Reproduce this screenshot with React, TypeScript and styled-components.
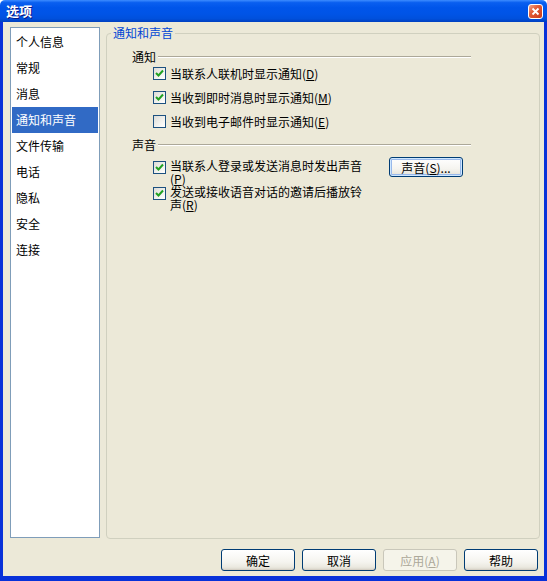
import React from "react";
import styled, { createGlobalStyle } from "styled-components";

const Global = createGlobalStyle`
  html, body { margin: 0; padding: 0; background: #ffffff; }
  body {
    font-family: "Noto Sans CJK SC", "Liberation Sans", sans-serif;
    font-size: 12px;
    color: #000;
  }
  #root { width: 547px; height: 581px; }
`;

const Window = styled.div`
  width: 547px;
  height: 581px;
  display: flex;
  flex-direction: column;
  box-sizing: border-box;
`;

const TitleBar = styled.div`
  height: 22px;
  flex: none;
  display: flex;
  align-items: center;
  justify-content: space-between;
  padding: 0 4px 0 6px;
  border-radius: 5px 5px 0 0;
  background: linear-gradient(
    to bottom,
    #3d8cff 0%,
    #0a5ff0 12%,
    #0055ea 35%,
    #0054e6 65%,
    #0050dc 85%,
    #003fc0 100%
  );
`;

const Title = styled.span`
  color: #fff;
  font-weight: bold;
  font-size: 13px;
  line-height: 14px;
  text-shadow: 1px 1px 0 #0a1883;
`;

const CloseButton = styled.span`
  width: 15px;
  height: 15px;
  box-sizing: border-box;
  border: 1px solid #fff;
  border-radius: 3px;
  background: linear-gradient(135deg, #f0a58d 0%, #e25b35 40%, #c83a1c 100%);
  display: flex;
  align-items: center;
  justify-content: center;
`;

const Frame = styled.div`
  flex: 1;
  display: flex;
  flex-direction: column;
  background: #ece9d8;
  border-style: solid;
  border-color: #0831d9;
  border-width: 0 3px 5px 3px;
  min-height: 0;
`;

const MainRow = styled.div`
  flex: 1;
  display: flex;
  gap: 6px;
  padding: 5px 4px 0 7px;
  min-height: 0;
`;

const NavList = styled.ul`
  list-style: none;
  margin: 0 0 1px 0;
  padding: 1px;
  width: 90px;
  box-sizing: border-box;
  background: #fff;
  border: 1px solid #7f9db9;
`;

const NavItem = styled.li<{ $selected?: boolean }>`
  height: 26px;
  line-height: 26px;
  padding-left: 4px;
  white-space: nowrap;
  color: ${(p) => (p.$selected ? "#fff" : "#000")};
  background: ${(p) => (p.$selected ? "#316ac5" : "transparent")};
`;

const GroupBox = styled.fieldset`
  flex: 1;
  margin: 0;
  padding: 0;
  min-width: 0;
  border: 1px solid #d0d0bf;
  border-radius: 4px;
`;

const Legend = styled.legend`
  margin-left: 4px;
  padding: 0 2px;
  line-height: 12px;
  color: #0046d5;
`;

const GroupContent = styled.div`
  padding-left: 24px;
`;

const Section = styled.div<{ $top: number }>`
  width: 340px;
  margin-top: ${(p) => p.$top}px;
  display: flex;
  flex-direction: column;
`;

const Heading = styled.div`
  display: flex;
  align-items: center;
  height: 14px;
  line-height: 14px;
  padding-left: 1px;
`;

const HeadingLine = styled.span`
  flex: 1;
  margin-left: 2px;
  border-top: 1px solid #aca899;
  border-bottom: 1px solid #ffffff;
`;

const Options = styled.div<{ $top: number; $gap: number }>`
  display: flex;
  flex-direction: column;
  gap: ${(p) => p.$gap}px;
  margin-top: ${(p) => p.$top}px;
  padding-left: 22px;
`;

const Row = styled.div`
  display: flex;
  align-items: flex-start;
  gap: 4px;
`;

const Box = styled.span<{ $top: number }>`
  width: 13px;
  height: 13px;
  flex: none;
  margin-top: ${(p) => p.$top}px;
  box-sizing: border-box;
  border: 1px solid #1c5180;
  background: linear-gradient(135deg, #dcdcd7 0%, #f3f3ef 60%, #ffffff 100%);
  display: flex;
  align-items: center;
  justify-content: center;
`;

const Label = styled.span<{ $lh: number; $width?: number }>`
  line-height: ${(p) => p.$lh}px;
  white-space: nowrap;
  ${(p) => (p.$width ? `width: ${p.$width}px;` : "")}
  u { text-decoration-thickness: 1px; text-underline-offset: 1px; }
`;

const XPButton = styled.button<{ $focused?: boolean }>`
  width: 74px;
  height: 22px;
  padding: 0;
  box-sizing: border-box;
  font-family: inherit;
  font-size: 12px;
  color: #000;
  border: 1px solid #003c74;
  border-radius: 3px;
  background: linear-gradient(to bottom, #ffffff 0%, #f5f4ef 60%, #ebe9e0 85%, #d8d4c8 100%);
  box-shadow: ${(p) =>
    p.$focused
      ? "inset 0 0 0 1px #cee7ff, inset 0 0 0 2px #98b8ea"
      : "inset 0 -1px 0 #d6d0c5"};
  u { text-decoration-thickness: 1px; }
  &:disabled {
    color: #aca899;
    border-color: #c9c7ba;
    background: #f5f4ea;
    box-shadow: none;
  }
`;

const SoundButton = styled(XPButton)`
  height: 20px;
  margin: -2px 0 0 15px;
`;

const Footer = styled.div`
  flex: none;
  display: flex;
  justify-content: flex-end;
  gap: 7px;
  padding: 10px 6px 5px 0;
`;

const Check = ({ checked, top }: { checked: boolean; top: number }) => (
  <Box $top={top}>
    {checked && (
      <svg width="9" height="9" viewBox="0 0 9 9">
        <path d="M1 4 L3.5 6.5 L8 1.5" fill="none" stroke="#21a121" strokeWidth="2" />
      </svg>
    )}
  </Box>
);

const navItems = ["个人信息", "常规", "消息", "通知和声音", "文件传输", "电话", "隐私", "安全", "连接"];

export default function App() {
  return (
    <>
      <Global />
      <Window>
        <TitleBar>
          <Title>选项</Title>
          <CloseButton>
            <svg width="9" height="9" viewBox="0 0 9 9">
              <path d="M1.5 1.5 L7.5 7.5 M7.5 1.5 L1.5 7.5" stroke="#fff" strokeWidth="1.8" />
            </svg>
          </CloseButton>
        </TitleBar>
        <Frame>
          <MainRow>
            <NavList>
              {navItems.map((n) => (
                <NavItem key={n} $selected={n === "通知和声音"}>
                  {n}
                </NavItem>
              ))}
            </NavList>
            <GroupBox>
              <Legend>通知和声音</Legend>
              <GroupContent>
                <Section $top={11}>
                  <Heading>
                    通知
                    <HeadingLine />
                  </Heading>
                  <Options $top={2} $gap={8}>
                    <Row>
                      <Check checked top={1} />
                      <Label $lh={16}>
                        当联系人联机时显示通知(<u>D</u>)
                      </Label>
                    </Row>
                    <Row>
                      <Check checked top={1} />
                      <Label $lh={16}>
                        当收到即时消息时显示通知(<u>M</u>)
                      </Label>
                    </Row>
                    <Row>
                      <Check checked={false} top={1} />
                      <Label $lh={16}>
                        当收到电子邮件时显示通知(<u>E</u>)
                      </Label>
                    </Row>
                  </Options>
                </Section>
                <Section $top={8}>
                  <Heading>
                    声音
                    <HeadingLine />
                  </Heading>
                  <Options $top={7} $gap={0}>
                    <Row>
                      <Check checked top={2} />
                      <Label $lh={13} $width={200}>
                        当联系人登录或发送消息时发出声音
                        <br />
                        (<u>P</u>)
                      </Label>
                      <SoundButton $focused>
                        声音(<u>S</u>)...
                      </SoundButton>
                    </Row>
                    <Row>
                      <Check checked top={2} />
                      <Label $lh={13}>
                        发送或接收语音对话的邀请后播放铃
                        <br />
                        声(<u>R</u>)
                      </Label>
                    </Row>
                  </Options>
                </Section>
              </GroupContent>
            </GroupBox>
          </MainRow>
          <Footer>
            <XPButton>确定</XPButton>
            <XPButton>取消</XPButton>
            <XPButton disabled>
              应用(<u>A</u>)
            </XPButton>
            <XPButton>帮助</XPButton>
          </Footer>
        </Frame>
      </Window>
    </>
  );
}
